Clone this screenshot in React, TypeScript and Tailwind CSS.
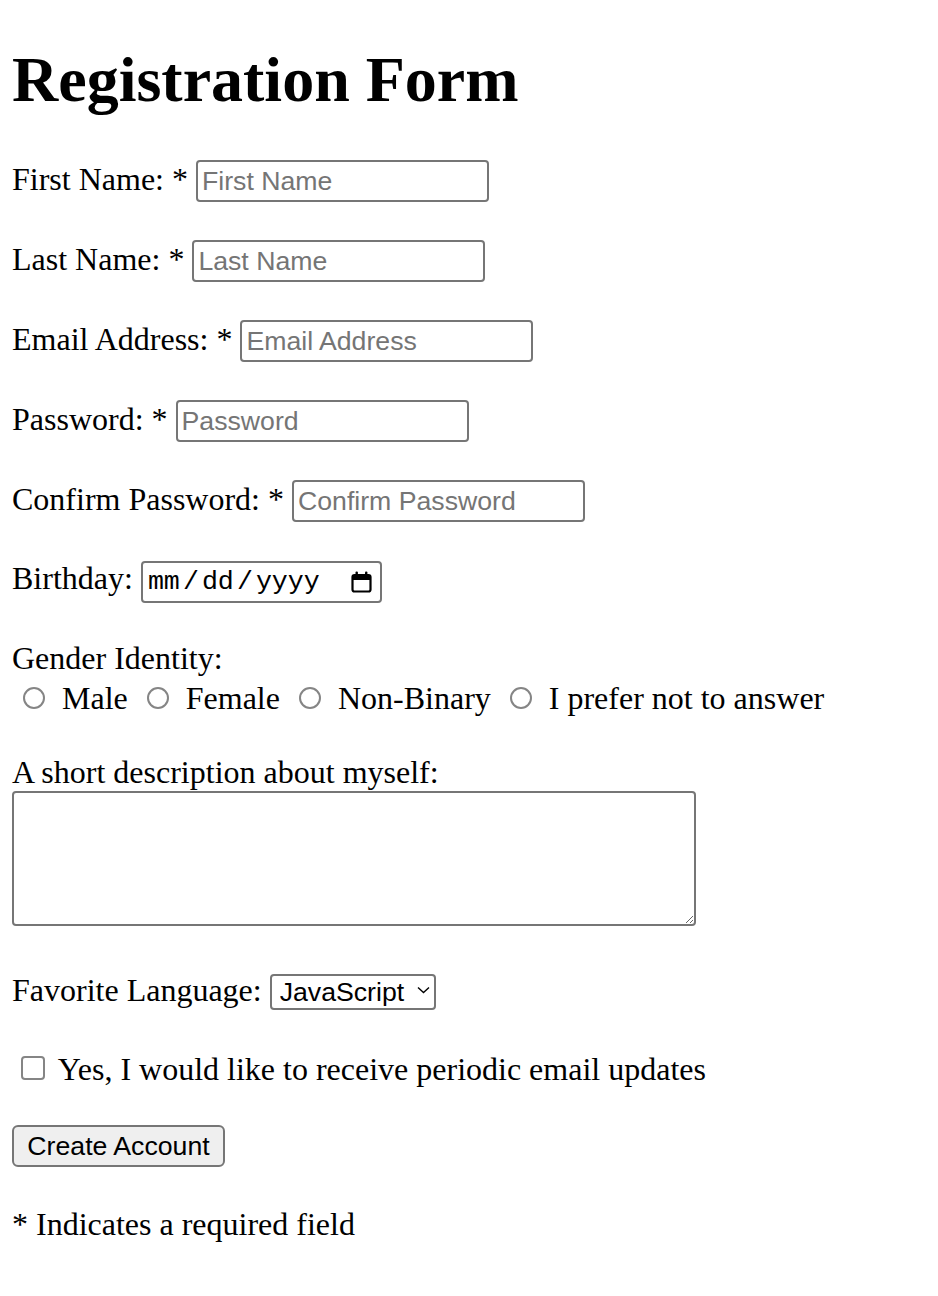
import { useState } from "react";

const fieldClass =
  "h-[42px] w-[293px] rounded-[4px] border-2 border-[#767676] bg-white px-[4px] align-baseline font-['Liberation_Sans',Arial,sans-serif] text-[26.67px] text-black placeholder:text-[#757575] outline-none";

const radioClass =
  "ml-[11px] mr-[9px] h-[22px] w-[22px] appearance-none rounded-full border-2 border-[#858585] bg-white align-baseline";

function TextRow({ label, placeholder, type = "text" }: { label: string; placeholder: string; type?: string }) {
  return (
    <div className="mt-[38px] first:mt-[43px]">
      <label>{label}: *</label>{" "}
      <input type={type} placeholder={placeholder} className={fieldClass} />
    </div>
  );
}

function CalendarIcon() {
  return (
    <svg width="21" height="22" viewBox="0 0 21 22" fill="none">
      <rect x="1.5" y="4" width="18" height="16.5" rx="2" stroke="#000" strokeWidth="2.2" />
      <rect x="1.5" y="4" width="18" height="5" fill="#000" />
      <rect x="4.5" y="0.5" width="2.4" height="4.5" rx="1" fill="#000" />
      <rect x="14" y="0.5" width="2.4" height="4.5" rx="1" fill="#000" />
    </svg>
  );
}

export default function App() {
  const [gender, setGender] = useState("");
  const [updates, setUpdates] = useState(false);

  return (
    <div className="min-h-[1296px] bg-white pl-[12px] pt-[43px] font-['Liberation_Serif','Times_New_Roman',serif] text-[32px] leading-[normal] text-black">
      <h1 className="text-[64px] font-bold leading-[74px]">Registration Form</h1>

      <form onSubmit={(e) => e.preventDefault()}>
        <TextRow label="First Name" placeholder="First Name" />
        <TextRow label="Last Name" placeholder="Last Name" />
        <TextRow label="Email Address" placeholder="Email Address" type="email" />
        <TextRow label="Password" placeholder="Password" type="password" />
        <TextRow label="Confirm Password" placeholder="Confirm Password" type="password" />

        {/* Birthday: drawn like Chrome's date field */}
        <div className="mt-[38px]">
          <label>Birthday:</label>{" "}
          <span className="inline-flex h-[42px] w-[241px] items-center rounded-[4px] border-2 border-[#767676] pl-[4px] pr-[8px] align-baseline font-['Liberation_Mono','Courier_New',monospace] text-[26.67px]">
            <span className="px-[1px]">mm</span>
            <span className="mx-[2px]">/</span>
            <span className="px-[1px]">dd</span>
            <span className="mx-[2px]">/</span>
            <span className="px-[1px]">yyyy</span>
            <span className="ml-auto flex items-center">
              <CalendarIcon />
            </span>
          </span>
        </div>

        <div className="mt-[35px] leading-[40px]">
          <div>Gender Identity:</div>
          <div>
            <input type="radio" name="gender" className={radioClass} checked={gender === "male"} onChange={() => setGender("male")} />{" "}
            Male{" "}
            <input type="radio" name="gender" className={radioClass} checked={gender === "female"} onChange={() => setGender("female")} />{" "}
            Female{" "}
            <input type="radio" name="gender" className={radioClass} checked={gender === "nb"} onChange={() => setGender("nb")} />{" "}
            Non-Binary{" "}
            <input type="radio" name="gender" className={radioClass} checked={gender === "none"} onChange={() => setGender("none")} />{" "}
            I prefer not to answer
          </div>
        </div>

        <div className="mt-[36px]">
          <label>A short description about myself:</label>
          <textarea className="block h-[135px] w-[684px] resize rounded-[4px] border-2 border-[#767676] bg-white outline-none" />
        </div>

        <div className="mt-[46px]">
          <label>Favorite Language:</label>{" "}
          <span className="relative inline-block align-baseline">
            <select className="h-[36px] w-[166px] appearance-none rounded-[4px] border-2 border-[#767676] bg-white pl-[8px] pr-[26px] font-['Liberation_Sans',Arial,sans-serif] text-[26.67px] outline-none">
              <option>JavaScript</option>
              <option>TypeScript</option>
              <option>Python</option>
              <option>Java</option>
            </select>
            <svg className="pointer-events-none absolute right-[6px] top-[14px]" width="13" height="8" viewBox="0 0 13 8" fill="none">
              <polyline points="1,1.5 6.5,6.5 12,1.5" stroke="#000" strokeWidth="1.4" />
            </svg>
          </span>
        </div>

        <div className="mt-[41px]">
          <input
            type="checkbox"
            checked={updates}
            onChange={(e) => setUpdates(e.target.checked)}
            className="ml-[9px] mr-[6px] h-[24px] w-[24px] appearance-none rounded-[4px] border-2 border-[#858585] bg-white align-baseline"
          />{" "}
          Yes, I would like to receive periodic email updates
        </div>

        <div className="mt-[37px]">
          <button
            type="submit"
            className="h-[42px] w-[213px] rounded-[6px] border-2 border-[#767676] bg-[#efefef] align-baseline font-['Liberation_Sans',Arial,sans-serif] text-[26.67px]"
          >
            Create Account
          </button>
        </div>

        <p className="mt-[39px]">* Indicates a required field</p>
      </form>
    </div>
  );
}
